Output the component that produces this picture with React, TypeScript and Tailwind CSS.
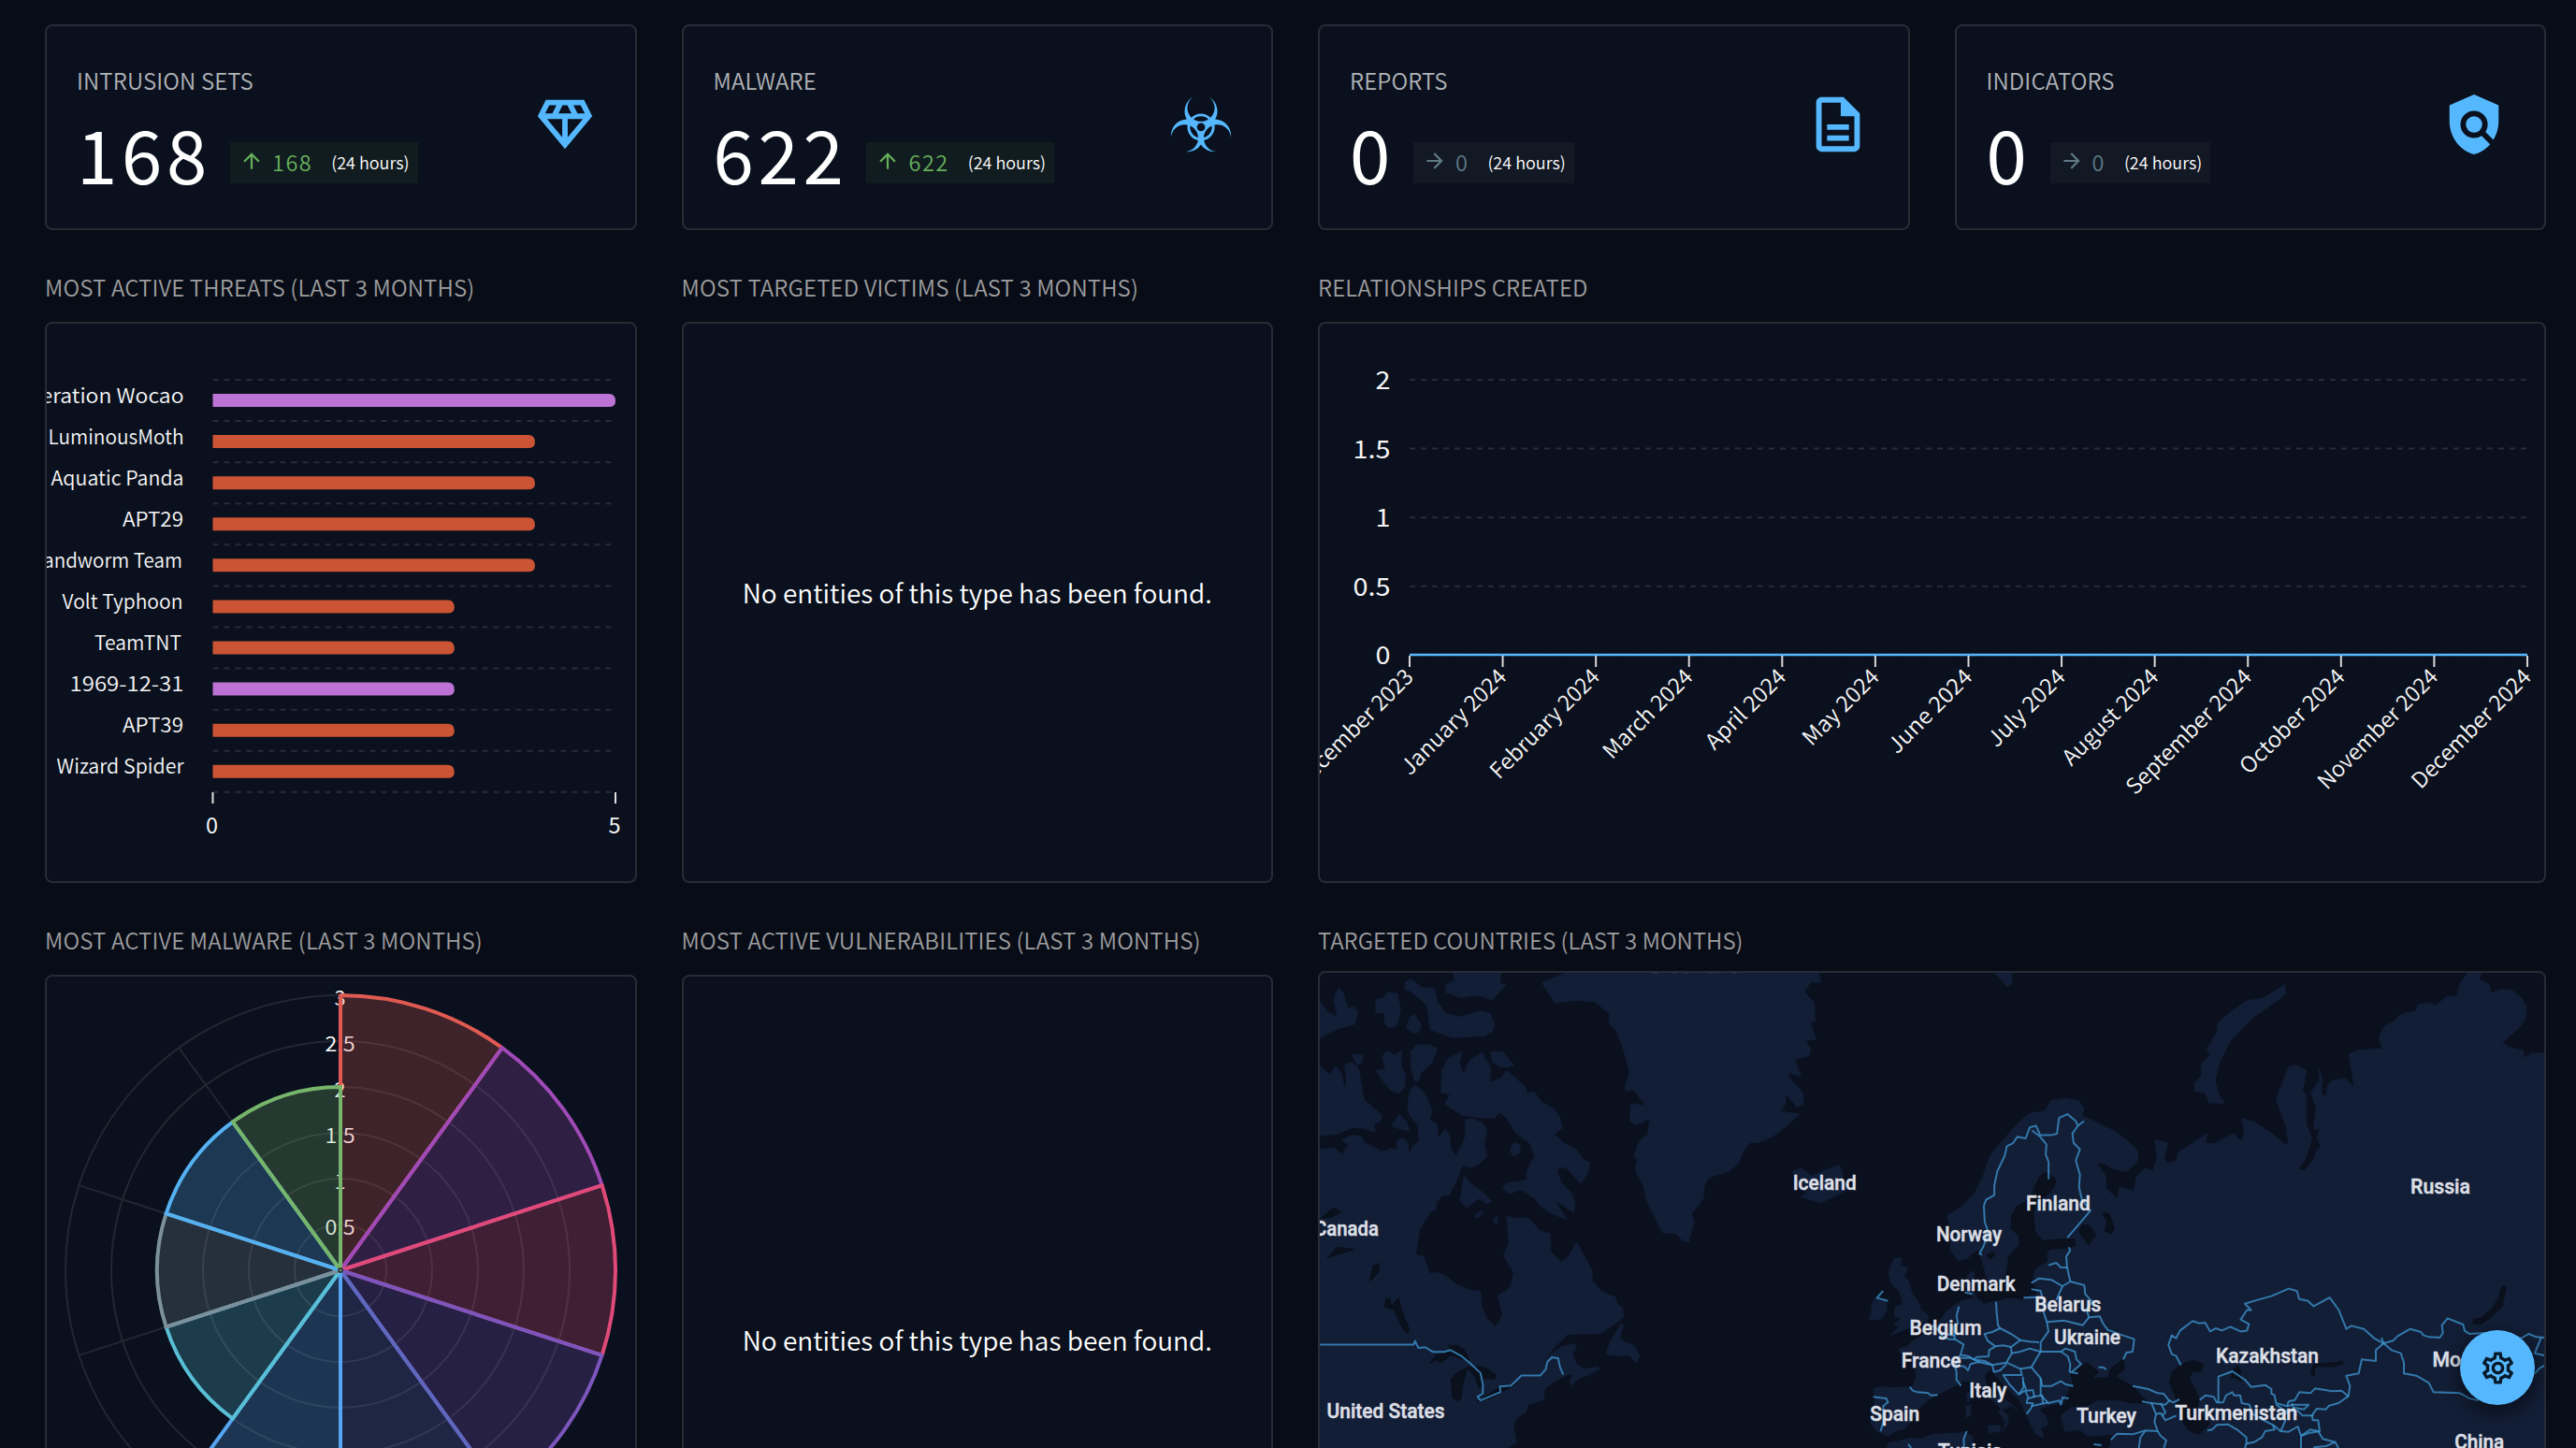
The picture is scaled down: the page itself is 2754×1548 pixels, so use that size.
import type { ReactNode } from "react";
import { MdArrowForward, MdArrowUpward, MdOutlineDescription, MdOutlineDiamond, MdOutlineSettings, MdPolicy } from "react-icons/md";

const FONT = '"Noto Sans CJK JP", "Noto Sans", sans-serif';

function BiohazardIcon() {
  return (
    <svg viewBox="0 0 24 24" fill="currentColor" className="size-[70px]">
      <path d="M23,16.06C23,16.29 23,16.5 22.96,16.7C22.78,14.14 20.64,12.11 18,12.11C17.63,12.11 17.27,12.16 16.92,12.23C16.96,12.5 17,12.73 17,13C17,15.35 15.31,17.32 13.07,17.81C13.42,20.05 15.31,21.79 17.65,21.96C17.43,22 17.22,22 17,22C14.92,22 13.07,20.94 12,19.34C10.93,20.94 9.09,22 7,22C6.78,22 6.57,22 6.35,21.96C8.69,21.79 10.57,20.06 10.93,17.81C8.68,17.32 7,15.35 7,13C7,12.73 7.04,12.5 7.07,12.23C6.73,12.16 6.37,12.11 6,12.11C3.36,12.11 1.22,14.14 1.03,16.7C1,16.5 1,16.29 1,16.06C1,12.85 3.59,10.24 6.81,10.14C6.3,9.27 6,8.25 6,7.17C6,4.94 7.23,3 9.06,2C7.81,2.9 7,4.34 7,6C7,7.35 7.56,8.59 8.47,9.5C9.38,8.59 10.62,8.04 12,8.04C13.37,8.04 14.62,8.59 15.5,9.5C16.43,8.59 17,7.35 17,6C17,4.34 16.18,2.9 14.94,2C16.77,3 18,4.94 18,7.17C18,8.25 17.7,9.27 17.18,10.14C20.4,10.24 23,12.85 23,16.06M9.27,10.11C10.05,10.62 11,10.92 12,10.92C13,10.92 13.95,10.62 14.73,10.11C14,9.45 13.06,9.03 12,9.03C10.94,9.03 10,9.45 9.27,10.11M12,14.47C12.82,14.47 13.5,13.8 13.5,13A1.5,1.5 0 0,0 12,11.5A1.5,1.5 0 0,0 10.5,13C10.5,13.8 11.17,14.47 12,14.47M10.97,16.79C10.87,14.9 9.71,13.29 8.05,12.55C8.03,12.7 8,12.84 8,13C8,14.82 9.27,16.34 10.97,16.79M15.96,12.55C14.29,13.29 13.12,14.9 13,16.79C14.73,16.34 16,14.82 16,13C16,12.84 15.97,12.7 15.96,12.55Z" />
    </svg>
  );
}

function StatCard({ title, value, icon }: { title: string; value: string; icon: ReactNode }) {
  const up = value !== "0";
  return (
    <div className="flex h-[220px] items-start justify-between rounded-lg border-2 border-[#262b36] bg-[#0a101d] pl-[32px] pr-[40px]">
      <div className="pt-[41px]">
        <div className="text-[24px] leading-[34px] tracking-[0.12px] text-[#b0b3b8]">{title}</div>
        <div className="mt-[20px] flex h-[80px] items-end">
          <span className="text-[78px] font-normal leading-[80px] tracking-[4.7px] text-white">{value}</span>
          <span
            className={
              up
                ? "ml-[20px] mb-[7px] flex h-[44px] items-center bg-[#111c20] pl-[10px] pr-[9px] text-[#66b05a]"
                : "ml-[20px] mb-[7px] flex h-[44px] items-center bg-[#121824] pl-[10px] pr-[9px] text-[#5f7a86]"
            }
          >
            {up ? <MdArrowUpward className="mb-[5px] size-[26px]" /> : <MdArrowForward className="mb-[5px] size-[26px]" />}
            <span className="-mt-[2px] ml-[9px] text-[23.5px] leading-[42px] tracking-[1.5px]">{value}</span>
            <span className="-mt-[2px] ml-[20px] text-[18px] leading-[42px] text-white">(24 hours)</span>
          </span>
        </div>
      </div>
      <div className="mt-[70px] text-[70px] text-[#55b8ff]">{icon}</div>
    </div>
  );
}

function Panel({ title, wide, map, children }: { title: string; wide?: boolean; map?: boolean; children: ReactNode }) {
  return (
    <section className={wide ? "col-span-2 flex flex-col" : "flex flex-col"}>
      <h2
        className={
          map
            ? "h-[94px] pt-[44px] text-[24px] leading-[34px] text-[#9c9d9f]"
            : "h-[98px] pt-[44px] text-[24px] leading-[34px] tracking-[0.13px] text-[#9c9d9f]"
        }
      >
        {title}
      </h2>
      <div className="flex-1 overflow-hidden rounded-lg border-2 border-[#262b36] bg-[#0a101d]">{children}</div>
    </section>
  );
}

const threats: [string, number, string, number, number][] = [
  ["Operation Wocao", 5, "#bd72d6", 184, 196.5],
  ["LuminousMoth", 4, "#ca5433", 145, 196.5],
  ["Aquatic Panda", 4, "#ca5433", 142, 196.5],
  ["APT29", 4, "#ca5433", 65, 196],
  ["Sandworm Team", 4, "#ca5433", 161, 195],
  ["Volt Typhoon", 3, "#ca5433", 129, 195.5],
  ["TeamTNT", 3, "#ca5433", 93, 194],
  ["1969-12-31", 3, "#bd72d6", 122, 196.5],
  ["APT39", 3, "#ca5433", 65, 196],
  ["Wizard Spider", 3, "#ca5433", 136, 196.5],
];

function ThreatsChart() {
  return (
    <svg viewBox="50 346 628 595" className="h-[595px] w-[628px]" fontFamily={FONT}>
      {Array.from({ length: 11 }, (_, i) => (
        <line key={i} x1="227.5" x2="658" y1={406 + i * 44.08} y2={406 + i * 44.08} stroke="#282c37" strokeWidth="2" strokeDasharray="6 6" />
      ))}
      {threats.map(([name, v, color, len, end], i) => {
        const y = 421 + i * 44.08;
        const r = 227.5 + v * 86.1;
        return (
          <g key={name}>
            <path d={`M227.5 ${y}H${r - 7}Q${r} ${y} ${r} ${y + 8}Q${r} ${y + 14} ${r - 7} ${y + 14}H227.5Z`} fill={color} />
            <text x={end} y={y + 10 - i * 0.08} textAnchor="end" fontSize="21.5" fontWeight="350" fill="#f6f6f7" textLength={len} lengthAdjust="spacingAndGlyphs">
              {name}
            </text>
          </g>
        );
      })}
      {[0, 5].map((v) => (
        <g key={v}>
          <line x1={227.5 + v * 86.1} x2={227.5 + v * 86.1} y1="847" y2="859" stroke="#e0e0e0" strokeWidth="2" />
          <text x={226.5 + v * 86.1} y="891" textAnchor="middle" fontSize="23.5" fontWeight="400" fill="#f4f4f4">
            {v}
          </text>
        </g>
      ))}
    </svg>
  );
}

const months: [string, number][] = [
  ["December 2023", 168],
  ["January 2024", 148],
  ["February 2024", 154],
  ["March 2024", 124],
  ["April 2024", 110],
  ["May 2024", 104],
  ["June 2024", 116],
  ["July 2024", 106],
  ["August 2024", 134],
  ["September 2024", 178],
  ["October 2024", 147],
  ["November 2024", 170],
  ["December 2024", 169],
];

function RelationshipsChart() {
  return (
    <svg viewBox="1411 346 1309 595" className="h-[595px] w-[1309px]" fontFamily={FONT}>
      {["2", "1.5", "1", "0.5", "0"].map((l, i) => (
        <g key={l}>
          <line x1="1507" x2="2702" y1={406 + i * 73.6} y2={406 + i * 73.6} stroke="#282c37" strokeWidth="2" strokeDasharray="6 6" />
          <text x="1486.5" y={416 + i * 73.6} textAnchor="end" fontSize="27" fontWeight="400" fill="#f4f4f4" textLength={l.length > 1 ? 40 : 16} lengthAdjust="spacingAndGlyphs">
            {l}
          </text>
        </g>
      ))}
      <line x1="1507" x2="2702" y1="700" y2="700" stroke="#55b8ff" strokeWidth="2.5" />
      {months.map(([m, len], i) => {
        const x = 1507 + i * 99.58;
        return (
          <g key={m}>
            <line x1={x} x2={x} y1="701" y2="713" stroke="#d8d8d8" strokeWidth="2" />
            <text
              transform={`translate(${x + 5.5} 725) rotate(-45)`}
              textAnchor="end"
              fontSize="23.5"
              fontWeight="350"
              fill="#f6f6f7"
              textLength={len}
              lengthAdjust="spacingAndGlyphs"
            >
              {m}
            </text>
          </g>
        );
      })}
    </svg>
  );
}

const slices: [number, string][] = [
  [3, "#e05a52"],
  [3, "#a04ab8"],
  [3, "#df4a78"],
  [3, "#7c55bd"],
  [3, "#5f68bf"],
  [3, "#56a5f2"],
  [2, "#58bfd6"],
  [2, "#7b909c"],
  [2, "#55b1f2"],
  [2, "#76b56b"],
];

const CX = 364;
const CY = 1358;
const polar = (r: number, deg: number) => {
  const a = ((deg - 90) * Math.PI) / 180;
  return `${(CX + r * Math.cos(a)).toFixed(2)} ${(CY + r * Math.sin(a)).toFixed(2)}`;
};

function MalwareChart() {
  return (
    <svg viewBox="50 1044 628 599" className="h-[599px] w-[628px]" fontFamily={FONT}>
      {[1, 2, 3, 4, 5, 6].map((k) => (
        <circle key={k} cx={CX} cy={CY} r={k * 49} fill="none" stroke="#222731" strokeWidth="2" />
      ))}
      {slices.map((_, i) => (
        <path key={i} d={`M${CX} ${CY}L${polar(294, i * 36)}`} stroke="#222731" strokeWidth="2" />
      ))}
      {["0.5", "1", "1.5", "2", "2.5", "3"].map((l, i) => (
        <text
          key={l}
          x={CX - 0.5}
          y={CY - (i + 1) * 49 + 11}
          textAnchor="middle"
          fontSize="21.5"
          fontWeight="350"
          fill="#ffffff"
          textLength={l.length > 1 ? 32 : 12}
          lengthAdjust="spacingAndGlyphs"
        >
          {l}
        </text>
      ))}
      {slices.map(([v, color], i) => (
        <path
          key={color}
          d={`M${CX} ${CY}L${polar(v * 98, i * 36)}A${v * 98} ${v * 98} 0 0 1 ${polar(v * 98, i * 36 + 36)}Z`}
          fill={color}
          fillOpacity="0.25"
          stroke={color}
          strokeWidth="4"
          strokeLinejoin="round"
        />
      ))}
      <circle cx={CX} cy={CY} r="2" fill="none" stroke="#343943" strokeWidth="2" />
    </svg>
  );
}

/* Each map region keeps its own coordinate grid; the group transform places it on the canvas. */
const WEST = "translate(1390 1020) scale(0.446429 0.336735)";
const EAST = "translate(2054 1020) scale(0.446429 0.336735)";
const EUROPE = "translate(1990 1300) scale(0.333333)";
const ASIA = "translate(2350 1300) scale(0.333333)";

const westLand = [
  "47,620 80,615 100,637 115,605 100,590 125,575 145,578 155,600 180,615 193,627 215,618 233,620 232,592 245,583 258,600 260,640 268,615 285,590 283,545 262,510 258,480 262,435 275,418 290,430 303,455 316,500 308,525 327,540 330,588 347,555 358,580 360,615 373,642 388,605 397,575 395,525 410,522 435,535 447,560 440,600 447,640 430,665 410,678 388,672 375,715 357,765 340,767 325,790 325,810 312,818 298,845 285,880 276,955 295,960 310,1015 325,1010 345,1020 375,1050 410,1068 432,1070 433,1110 445,1155 468,1183 478,1165 485,1140 473,1083 495,1070 507,1045 512,1010 500,985 488,955 500,920 495,833 520,838 545,837 575,880 598,887 600,945 625,978 640,965 662,915 680,960 700,1010 698,1035 720,1070 755,1090 758,1110 773,1125 773,1155 745,1180 718,1205 640,1207 615,1240 590,1275 578,1300 600,1270 630,1245 655,1237 662,1245 652,1270 660,1300 680,1318 710,1310 718,1315 700,1330 665,1350 650,1368 645,1355 655,1335 640,1335 610,1355 585,1380 583,1415 545,1430 540,1455 520,1470 510,1495 515,1540 517,1550 495,1568 47,1568",
  "732,1270 745,1225 768,1175 775,1180 765,1215 775,1230 800,1245 812,1275 805,1297 790,1275 760,1275",
  "47,150 65,185 90,200 80,145 92,108 103,125 115,175 128,165 137,185 130,222 95,235 70,250 47,265",
  "182,145 200,140 210,122 232,125 240,175 232,225 215,235 203,220 203,185 182,187",
  "255,235 262,205 272,190 290,225 285,248 270,250",
  "252,88 265,80 290,105 322,110 327,150 350,190 385,200 430,180 455,188 465,225 460,245 440,260 365,265 312,240 303,160 265,118 252,112",
  "347,98 370,85 368,59 480,59 478,92 492,97 460,145 425,130 385,138 350,122",
  "266,360 265,310 280,288 310,288 328,300 315,345 290,375 285,400 275,405",
  "125,320 150,320 147,345 137,352",
  "182,370 205,365 197,325 207,307 225,320 243,308 240,350 252,385 250,420 235,443 215,430 195,395",
  "47,355 72,385 85,358 97,375 107,430 112,405 107,350 125,345 140,365 152,462 195,510 192,530 175,540 180,565 150,552 125,550 90,570 47,577",
  "220,545 237,510 255,535 262,562 235,553",
  "338,440 340,370 355,330 388,310 380,345 392,382 405,340 435,312 455,360 455,408 480,395 495,370 520,400 538,420 542,442 560,438 578,470 605,490 620,515 628,550 608,572 630,600 660,618 680,655 693,660 690,690 672,728 640,680 620,675 615,690 625,725 650,760 658,790 655,820 608,780 638,842 605,825 575,800 565,780 545,760 530,748 500,760 487,745 492,728 542,718 543,690 562,640 550,600 515,565 495,520 478,500 465,520 430,520 385,510 347,475 360,445",
  "457,310 485,310 512,355 480,360 460,340",
  "503,625 512,598 525,605 527,630 512,642",
  "383,785 393,705 410,730 440,760 458,785 445,792 428,775 400,803",
  "418,832 432,815 437,820 425,838",
  "463,842 472,832 472,852 466,855",
  "580,92 635,59 1240,59 1247,88 1222,88 1207,120 1230,155 1233,213 1222,218 1235,270 1210,275 1222,300 1218,322 1183,335 1198,380 1198,390 1172,375 1167,388 1190,420 1203,440 1205,478 1190,485 1162,440 1162,475 1148,500 1195,508 1160,550 1130,580 1100,597 1075,600 1060,630 1048,665 1025,690 978,710 967,735 965,775 937,825 943,850 930,913 920,913 897,885 870,885 855,850 830,785 822,735 803,685 808,655 800,640 812,595 833,570 838,520 818,535 805,543 790,530 793,475 810,478 830,483 798,430 782,437 777,425 790,375 775,305 757,240 740,220 742,190 705,150 655,147 612,155",
  "1180,690 1200,680 1225,705 1250,690 1290,670 1298,690 1300,720 1315,745 1285,765 1245,790 1200,770 1215,755 1185,740 1190,715",
];

const westWater = [
  "50,840 80,805 97,818 75,835",
  "65,965 90,930 130,938 95,950",
  "167,1038 175,990 190,982 187,1010",
  "203,1120 205,1098 215,1092 218,1120 235,1093 245,1140 262,1195 255,1203 240,1175 225,1130",
  "310,1300 325,1275 360,1255 355,1242 375,1242 392,1255 405,1290 385,1285 360,1270 350,1285 335,1298 330,1285",
  "365,1405 362,1350 375,1330 400,1312 395,1340 388,1370 385,1410 375,1418",
  "400,1312 440,1310 468,1335 465,1350 440,1345 430,1380 418,1340",
  "425,1420 450,1400 478,1375 520,1362 490,1385 450,1413",
];

const westBorders = [
  "47,1240 272,1240 275,1228 283,1250 300,1248 318,1263 345,1263 360,1257 385,1275 408,1300 432,1330 438,1370 437,1395 425,1405 432,1417 480,1390 478,1373 505,1370 530,1338 575,1338 588,1318 592,1295 603,1280 618,1283 622,1310 630,1335",
];

const eastLand = [
  "62,830 100,800 130,755 150,700 165,640 200,585 230,540 260,505 295,500 312,465 345,458 375,465 390,490 385,515 405,525 460,560 500,600 518,625 518,660 490,690 460,680 430,660 420,665 440,700 443,745 470,778 475,740 510,752 515,710 535,680 555,690 565,650 560,588 590,600 580,650 590,665 612,655 615,630 650,600 685,570 680,600 700,603 748,570 765,595 775,570 768,522 800,535 840,570 870,605 880,600 875,550 850,460 880,360 895,352 922,368 918,400 912,435 922,445 922,540 935,585 920,650 903,683 918,688 940,655 945,630 957,610 948,580 955,555 940,555 947,485 933,440 955,400 952,365 960,400 958,445 970,452 973,418 985,400 1015,395 1038,425 1025,318 1045,305 1105,300 1097,262 1110,230 1130,215 1150,190 1185,180 1190,160 1218,155 1230,165 1260,135 1283,135 1290,95 1310,59 1340,62 1335,80 1358,95 1365,125 1385,112 1412,113 1438,140 1449,170 1447,205 1430,235 1400,270 1390,282 1410,298 1440,305 1445,332 1460,315 1492,315 1492,1568 450,1568 460,1525 400,1530 380,1510 345,1515 335,1465 365,1435 350,1400 300,1300 290,1130 270,1040 205,1040 160,1040 150,990 135,935 110,965 90,973 70,940 72,880",
  "176,59 217,59 215,95 205,103 195,85",
  "870,98 872,125 860,140 790,205 740,275 715,340 703,400 710,440 725,473 690,472 680,440 655,435 655,410 672,385 672,350 692,320 685,300 710,245 710,220 745,180 780,148 820,140",
];

const eastWater = [
  "270,745 285,705 300,695 323,715 318,740 300,765 275,785 268,830 272,880 290,910 330,905 365,905 370,925 345,935 310,935 300,945 300,975 270,1000 265,1040 262,1080 245,1095 180,1085 150,1110 140,1070 150,1045 195,1040 205,1010 210,960 235,925 235,895 215,870 217,830 230,800 245,790 265,770",
  "385,860 400,860 418,890 400,922 388,900 378,880",
  "435,820 450,825 462,870 455,888 440,880 445,850",
  "600,1330 620,1305 650,1290 675,1300 670,1325 650,1325 640,1345 655,1380 665,1410 660,1450 690,1490 665,1525 640,1510 625,1480 615,1430 605,1390 595,1360",
];

const eastBorders = [
  "145,955 140,950 150,925 160,880 152,850 150,800 155,780 175,765 175,735 182,690 200,640 205,610 220,600 230,580 250,585 260,550 275,545 285,575 310,575 325,570 330,520 350,508 370,530 375,545 390,530",
  "265,560 285,580 300,605 298,635 305,660 305,715",
  "375,545 362,570 365,600 380,620 370,655 380,700 378,740 385,780 405,815 350,900",
  "622,1305 610,1275 600,1270 592,1240 600,1210 610,1220 620,1195 650,1165 665,1172 680,1170 692,1198 705,1188 720,1195 740,1183 765,1198 780,1195 785,1175 765,1160 780,1130 790,1130 775,1110 800,1100 840,1085 880,1062 900,1070 905,1095 925,1100 940,1118 978,1090 1000,1130 1018,1190 1030,1180 1060,1190 1085,1220 1110,1238",
];

const europeLand = [
  "520,255 490,258 440,272 400,280 370,265 350,250 335,225 340,190 362,175 362,200 355,235 370,262 330,270 300,285 270,310 250,340 220,370 190,385 165,400 150,418 120,425 125,440 160,450 175,480 175,520 165,548 100,550 60,548 38,555 45,580 38,620 30,665 50,690 85,705 110,690 140,680 165,650 190,610 215,590 245,572 270,560 300,545 325,530 350,530 380,545 400,570 430,600 450,620 470,640 470,665 455,690 462,660 440,625 480,610 500,620 470,595 430,570 400,540 395,510 415,490 430,510 455,540 480,565 510,595 530,640 545,670 560,700 585,710 575,680 600,670 590,640 570,620 610,605 650,600 700,600 700,250",
  "105,135 130,135 125,160 150,165 135,195 150,205 160,240 185,280 190,300 215,320 210,345 160,355 95,382 120,355 105,345 130,330 105,320 110,290 130,285 130,270 120,240 95,215 88,180",
  "45,260 80,275 82,300 65,330 25,333 35,300 30,290",
  "335,610 352,605 350,640 337,645",
  "405,672 445,672 447,690 410,695",
  "338,570 348,565 346,595 340,597",
  "80,744 90,725 120,722 150,712 190,715 230,700 330,695 355,705 360,744",
];

const europeWater = [
  "665,560 680,530 670,505 700,480 725,470 760,500 740,520 790,520 800,490 840,460 845,490 815,515 870,545 900,580 925,600 870,600 820,590 760,590 720,610 680,610 650,600",
  "400,125 425,115 428,125 412,138",
];

const europeBorders = [
  "665,100 670,110 657,130 660,165 670,210 645,225 625,270",
  "600,158 625,150 640,165 660,165",
  "545,215 570,200 610,205 645,225",
  "545,235 575,240 580,260 520,262",
  "670,210 715,222 718,250 740,275 722,300 730,325 765,322 775,345 790,365 830,380 875,395 870,435 850,438 840,460",
  "580,260 590,280 585,310 595,340 650,335 710,350 730,325",
  "595,340 600,370 575,405 575,435",
  "432,275 434,310 438,350 445,360 480,378 510,398 540,403 570,405",
  "445,360 420,372 395,378 405,400 430,418 410,430 408,450 370,452 360,460",
  "430,418 455,415 480,420 510,398",
  "480,420 482,440 465,470 420,478 395,465 360,460",
  "482,440 510,435 540,425 575,435 640,435 655,425 685,435 690,460 705,475 675,500",
  "640,435 662,450 670,475 668,500 695,505",
  "575,435 560,460 545,485 510,490 465,470",
  "545,485 575,520 580,545 610,545 640,530 655,540 680,545",
  "420,478 425,500 445,495 465,475",
  "510,490 515,510 455,510 475,540 505,572 520,550 518,515",
  "575,520 575,575 600,600 635,592 640,605 645,582 665,585",
  "505,572 525,560 535,580 530,600 550,600 545,615 530,635",
  "518,530 530,560 550,558 555,580 535,585",
  "550,580 580,575 582,600",
  "545,610 600,598",
  "313,290 305,320 310,345 295,355 300,395 328,412 318,445 345,450 360,460",
  "245,365 260,385 280,395 300,395",
  "225,350 260,375 300,385",
  "318,445 300,480 305,500 305,525 320,545",
  "300,480 330,482 342,495 350,475 375,468 420,478",
  "318,455 350,455 380,470",
  "155,548 165,560 180,565 215,568 222,575 245,574",
  "38,580 60,583 80,585 85,597 70,610 70,660 62,690",
  "70,240 50,262 70,268 85,272",
  "330,744 328,715 338,690",
  "150,732 160,744",
  "870,545 920,555 950,568 970,570 985,590 1000,598 1020,588",
  "900,595 930,600 945,635 960,632 975,655 1010,640",
  "930,600 975,605 990,590",
  "960,600 975,630 965,640",
  "945,635 940,660 950,690 910,688 870,700 820,698 800,718",
  "910,690 895,710 890,744",
  "950,690 960,705 978,720 970,744",
  "760,485 775,485 785,492",
  "745,732 770,735",
  "332,245 355,250",
];

const asiaWater = [
  "980,222 988,230 975,290 965,300 945,320 905,348 880,345 885,332 910,325 945,295 965,260 972,230",
  "105,520 115,490 125,480 135,490 137,530 118,518",
  "362,500 370,475 440,470 465,466 462,474 440,482 385,482 372,490 375,515 365,508",
];

const asiaBorders = [
  "595,408 625,400 640,385 680,362 715,372 722,382 740,388 775,390 785,375 782,350 800,328 850,348 855,368 870,378 920,375 960,400 1000,405 1040,390 1060,378 1085,388 1110,390",
  "1100,390 1080,440 1110,447",
  "1110,480 1095,488 1080,505",
  "595,408 620,430 650,440 660,470 660,505 700,512 740,535 755,565 840,568 870,585 900,592",
  "588,390 595,408 570,430 570,465 525,460 515,505 475,512 487,545 482,578 450,600 420,608 410,620 380,618 365,640 368,655 385,655 390,690 360,695 330,705",
  "482,578 460,560 430,562 375,553 360,568 325,565 310,590 290,595 285,610 250,600 245,575 235,570 235,555 215,542 170,548 150,525 110,498 65,515 65,600",
  "5,590 25,575 50,580 60,598 80,598 90,575 110,565 115,575 135,575 140,600 165,605 175,635 210,655 240,670 245,685 215,690 205,710 180,725 155,730 155,710 125,685 95,668 60,670 45,685 30,688",
  "285,610 305,605 355,605 340,620 310,615 270,640 280,655 265,690 290,692 320,675 330,705 330,744",
  "240,670 265,690",
  "250,605 280,625 320,625 335,640 370,640",
  "300,600 315,640",
  "330,705 360,685 385,690 400,715 440,725 450,744",
  "370,742 410,738 440,725",
  "155,730 150,744",
];

function Shapes({ at, land, water, lines }: { at: string; land?: string[]; water?: string[]; lines?: string[] }) {
  return (
    <g transform={at}>
      {land?.map((p) => <polygon key={p} points={p} fill="#121e36" stroke="#121e36" strokeWidth="3" strokeLinejoin="round" />)}
      {water?.map((p) => <polygon key={p} points={p} fill="#0a101c" stroke="#0a101c" strokeWidth="3" strokeLinejoin="round" />)}
      {lines?.map((p) => (
        <polyline key={p} points={p} fill="none" stroke="#3f97d3" strokeOpacity="0.75" strokeWidth="2" strokeLinejoin="round" vectorEffect="non-scaling-stroke" />
      ))}
    </g>
  );
}

const countries: [string, number, number, number][] = [
  ["Canada", 1439.5, 1321.4, 69],
  ["United States", 1481.5, 1515.6, 126],
  ["Iceland", 1950.7, 1271.9, 68],
  ["Norway", 2105, 1327.3, 70],
  ["Denmark", 2112.7, 1380, 84],
  ["Belarus", 2210.7, 1401.7, 71],
  ["Belgium", 2080, 1427.3, 77],
  ["Ukraine", 2231.5, 1437.3, 71],
  ["France", 2064.7, 1462, 64],
  ["Italy", 2125.3, 1494.3, 40],
  ["Spain", 2025.7, 1518.7, 53],
  ["Turkey", 2252, 1520.7, 64],
  ["Tunisia", 2106.3, 1559, 69],
  ["Finland", 2200.4, 1294.4, 69],
  ["Russia", 2609, 1276.2, 64],
  ["Kazakhstan", 2424, 1457.3, 110],
  ["Turkmenistan", 2390.7, 1518.3, 131],
  ["Mongolia", 2645, 1460.7, 89],
  ["China", 2650.7, 1549, 53],
];

function CountriesMap() {
  return (
    <svg viewBox="1411 1040 1309 508" className="h-[508px] w-[1309px]" fontFamily="Roboto, sans-serif">
      <Shapes at={EAST} land={eastLand} />
      <Shapes at={EUROPE} land={europeLand} />
      <Shapes at={EAST} water={eastWater} />
      <Shapes at={EUROPE} water={europeWater} lines={europeBorders} />
      <Shapes at={EAST} lines={eastBorders} />
      <Shapes at={ASIA} water={asiaWater} lines={asiaBorders} />
      <Shapes at={WEST} land={westLand} water={westWater} lines={westBorders} />
      <text x="1811" y="1041" textAnchor="middle" fontSize="22" fill="#27334a">
        Greenland
      </text>
      {countries.map(([name, x, y, len]) => (
        <text
          key={name}
          x={x}
          y={y}
          textAnchor="middle"
          fontSize="22"
          fontWeight="500"
          fill="#dcdfe5"
          stroke="#dcdfe5"
          strokeWidth="0.5"
          textLength={len}
          lengthAdjust="spacingAndGlyphs"
        >
          {name}
        </text>
      ))}
    </svg>
  );
}

function Empty({ low }: { low?: boolean }) {
  return (
    <div
      className={
        low
          ? "flex h-[775px] items-center justify-center whitespace-nowrap text-[28px] text-white"
          : "flex h-[574px] items-center justify-center whitespace-nowrap text-[28px] text-white"
      }
    >
      No entities of this type has been found.
    </div>
  );
}

export default function App() {
  return (
    <div className="relative h-[1548px] w-[2754px] overflow-hidden bg-[#080c16] font-['Noto_Sans_CJK_JP','Noto_Sans',sans-serif] font-[350]">
      <main className="pl-[48px] pr-[32px] pt-[26px]">
        <div className="grid grid-cols-4 gap-x-[48px]">
          <StatCard title="INTRUSION SETS" value="168" icon={<MdOutlineDiamond />} />
          <StatCard title="MALWARE" value="622" icon={<BiohazardIcon />} />
          <StatCard title="REPORTS" value="0" icon={<MdOutlineDescription />} />
          <StatCard title="INDICATORS" value="0" icon={<MdPolicy />} />
        </div>
        <div className="grid h-[698px] grid-cols-4 gap-x-[48px]">
          <Panel title="MOST ACTIVE THREATS (LAST 3 MONTHS)">
            <ThreatsChart />
          </Panel>
          <Panel title="MOST TARGETED VICTIMS (LAST 3 MONTHS)">
            <Empty />
          </Panel>
          <Panel title="RELATIONSHIPS CREATED" wide>
            <RelationshipsChart />
          </Panel>
        </div>
        <div className="grid h-[900px] grid-cols-4 gap-x-[48px]">
          <Panel title="MOST ACTIVE MALWARE (LAST 3 MONTHS)">
            <MalwareChart />
          </Panel>
          <Panel title="MOST ACTIVE VULNERABILITIES (LAST 3 MONTHS)">
            <Empty low />
          </Panel>
          <Panel title="TARGETED COUNTRIES (LAST 3 MONTHS)" wide map>
            <CountriesMap />
          </Panel>
        </div>
      </main>
      <button className="absolute bottom-[46px] right-[44px] flex size-[80px] items-center justify-center rounded-full bg-[#55b8ff] text-[#08192a] shadow-[0_6px_16px_4px_rgba(0,0,0,0.4)]">
        <MdOutlineSettings className="size-[41px]" />
      </button>
    </div>
  );
}
